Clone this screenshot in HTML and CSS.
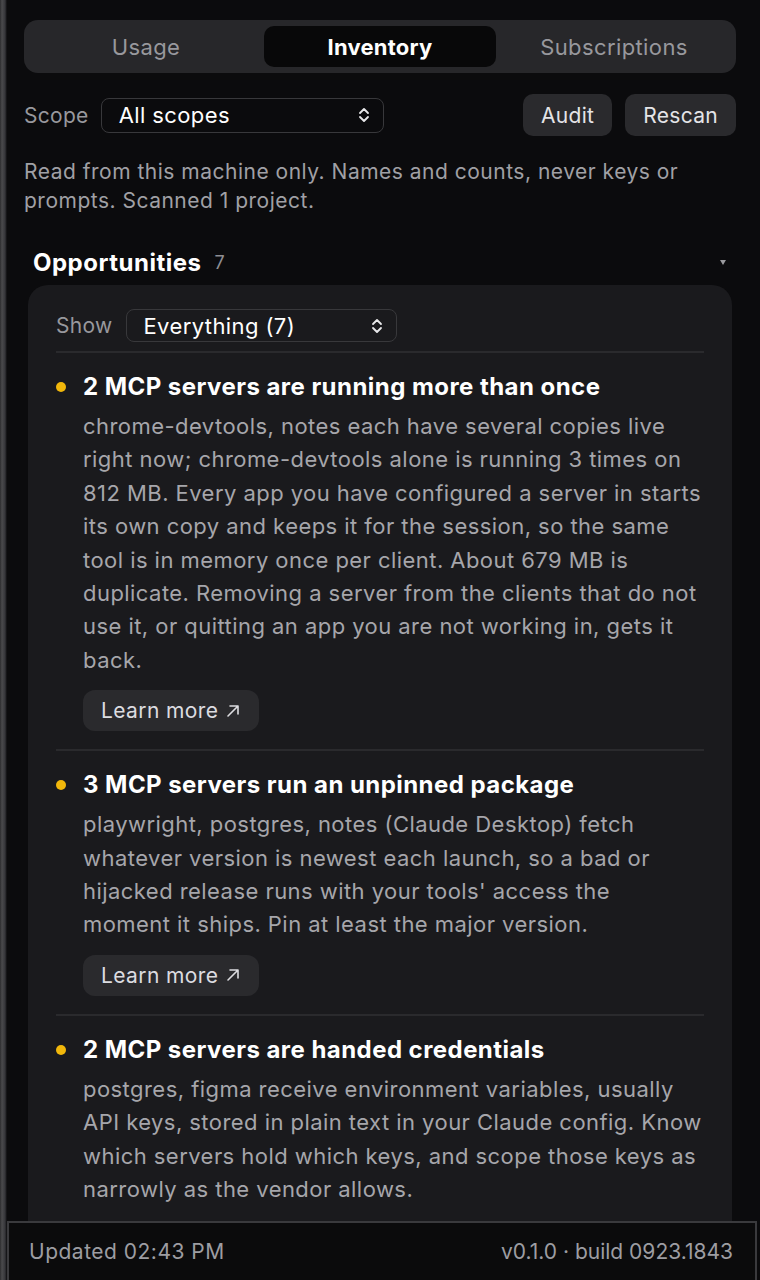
FILE: index.html
```html
<!DOCTYPE html>
<html>
<head lang="en">
    <meta charset="UTF-8">
    <title>Inventory</title>
    <link rel="stylesheet" href="styles.css">
</head>
<body>
<div class="app">
    <div class="main">
        <div class="tabs">
            <div class="tab">Usage</div>
            <div class="tab active">Inventory</div>
            <div class="tab">Subscriptions</div>
        </div>

        <div class="toolbar">
            <span class="label">Scope</span>
            <div class="select scope-select">
                <span>All scopes</span>
                <svg class="updown" width="14" height="18" viewBox="0 0 14 18"><path d="M3 7 L7 3 L11 7 M3 11 L7 15 L11 11" fill="none" stroke="#e8e8ea" stroke-width="1.8" stroke-linecap="round" stroke-linejoin="round"/></svg>
            </div>
            <div class="spacer"></div>
            <button class="btn">Audit</button>
            <button class="btn">Rescan</button>
        </div>

        <p class="note">Read from this machine only. Names and counts, never keys or prompts. Scanned 1 project.</p>

        <div class="section-head">
            <span class="section-title">Opportunities</span>
            <span class="count">7</span>
            <span class="caret"></span>
        </div>

        <div class="card">
            <div class="filter">
                <span class="label">Show</span>
                <div class="select show-select">
                    <span>Everything (7)</span>
                    <svg class="updown" width="14" height="18" viewBox="0 0 14 18"><path d="M3 7 L7 3 L11 7 M3 11 L7 15 L11 11" fill="none" stroke="#e8e8ea" stroke-width="1.8" stroke-linecap="round" stroke-linejoin="round"/></svg>
                </div>
            </div>

            <div class="item">
                <span class="dot"></span>
                <div class="item-body">
                    <div class="item-title">2 MCP servers are running more than once</div>
                    <p class="item-text">chrome-devtools, notes each have several copies live right now; chrome-devtools alone is running 3 times on 812 MB. Every app you have configured a server in starts its own copy and keeps it for the session, so the same tool is in memory once per client. About 679 MB is duplicate. Removing a server from the clients that do not use it, or quitting an app you are not working in, gets it back.</p>
                    <button class="learn">Learn more <svg width="16" height="16" viewBox="0 0 16 16"><path d="M3 13 L13 3 M5 3 H13 V11" fill="none" stroke="#dcdce0" stroke-width="1.6" stroke-linecap="round" stroke-linejoin="round"/></svg></button>
                </div>
            </div>

            <div class="item">
                <span class="dot"></span>
                <div class="item-body">
                    <div class="item-title">3 MCP servers run an unpinned package</div>
                    <p class="item-text">playwright, postgres, notes (Claude Desktop) fetch whatever version is newest each launch, so a bad or hijacked release runs with your tools' access the moment it ships. Pin at least the major version.</p>
                    <button class="learn">Learn more <svg width="16" height="16" viewBox="0 0 16 16"><path d="M3 13 L13 3 M5 3 H13 V11" fill="none" stroke="#dcdce0" stroke-width="1.6" stroke-linecap="round" stroke-linejoin="round"/></svg></button>
                </div>
            </div>

            <div class="item">
                <span class="dot"></span>
                <div class="item-body">
                    <div class="item-title">2 MCP servers are handed credentials</div>
                    <p class="item-text">postgres, figma receive environment variables, usually API keys, stored in plain text in your Claude config. Know which servers hold which keys, and scope those keys as narrowly as the vendor allows.</p>
                </div>
            </div>
        </div>
    </div>

    <div class="footer">
        <span class="updated">Updated 02:43 PM</span>
        <span>v0.1.0 · build 0923.1843</span>
    </div>
</div>
</body>
</html>
```

FILE: styles.css
```css
*{
    padding: 0;
    margin: 0;
    box-sizing: border-box;
}
body{
    background: #0b0b0d;
    font-family: Inter, "Noto Sans", sans-serif;
    color: #f4f4f6;
}
.app{
    width: 760px;
    height: 1280px;
    display: flex;
    flex-direction: column;
    background: linear-gradient(to right, #2c2c2e 0, #4a4a4c 2px, #36363a 5px, #0b0b0d 7px);
}
.main{
    flex: 1;
    overflow: hidden;
    padding: 20px 24px 0 24px;
}

/* tabs */
.tabs{
    height: 53px;
    background: #27272a;
    border-radius: 14px;
    padding: 6px;
    display: grid;
    grid-template-columns: 1fr 1fr 1fr;
    gap: 2px;
}
.tab{
    display: flex;
    align-items: center;
    justify-content: center;
    font-size: 22px;
    letter-spacing: 0.4px;
    color: #98989d;
    border-radius: 10px;
}
.tab.active{
    background: #080809;
    color: #fff;
    font-weight: 700;
    letter-spacing: 0.2px;
}

/* toolbar */
.toolbar{
    margin-top: 21px;
    height: 42px;
    display: flex;
    align-items: center;
}
.label{
    font-size: 21px;
    letter-spacing: 0.3px;
    color: #98989d;
    margin-right: 12px;
}
.select{
    height: 35px;
    border: 1px solid #38383b;
    border-radius: 8px;
    display: flex;
    align-items: center;
    justify-content: space-between;
    padding: 0 12px 0 17px;
    font-size: 22px;
    letter-spacing: 0.4px;
    color: #fff;
}
.scope-select{
    width: 283px;
}
.spacer{
    flex: 1;
}
.btn{
    height: 42px;
    padding: 0 18px;
    border: none;
    border-radius: 10px;
    background: #2a2a2d;
    color: #e4e4e7;
    font-family: inherit;
    font-size: 21px;
    letter-spacing: 0.3px;
    margin-left: 13px;
}

.note{
    margin-top: 21px;
    font-size: 21px;
    letter-spacing: 0.5px;
    line-height: 29px;
    color: #a0a0a5;
}

/* section */
.section-head{
    margin-top: 32px;
    padding: 0 9px;
    display: flex;
    align-items: center;
    height: 30px;
}
.section-title{
    font-size: 24px;
    letter-spacing: 0.5px;
    font-weight: 700;
    color: #fff;
}
.count{
    font-size: 18px;
    color: #8e8e93;
    margin-left: 13px;
}
.caret{
    margin-left: auto;
    width: 0;
    height: 0;
    border-left: 3px solid transparent;
    border-right: 3px solid transparent;
    border-top: 5px solid #9a9a9e;
    margin-right: 1px;
}

.card{
    margin: 8px 4px 0 4px;
    background: #1a1a1d;
    border-radius: 20px;
    padding: 24px 28px 40px 28px;
}
.filter{
    display: flex;
    align-items: center;
    padding-bottom: 9px;
    border-bottom: 2px solid #2a2a2d;
}
.filter .label{
    margin-right: 13px;
}
.show-select{
    width: 271px;
    height: 33px;
}

.item{
    display: flex;
    padding: 19px 0 18px 0;
    border-bottom: 2px solid #2a2a2d;
}
.item:last-child{
    border-bottom: none;
}
.dot{
    width: 10px;
    height: 10px;
    border-radius: 50%;
    background: #f1b70b;
    margin: 10px 17px 0 0;
    flex-shrink: 0;
}
.item-body{
    flex: 1;
}
.item-title{
    font-size: 24px;
    letter-spacing: 0.45px;
    font-weight: 700;
    line-height: 30px;
    color: #fff;
}
.item-text{
    margin-top: 8px;
    font-size: 22px;
    letter-spacing: 0.45px;
    line-height: 33.4px;
    color: #a6a6ab;
}
.learn{
    margin-top: 13px;
    height: 41px;
    padding: 0 18px;
    border: none;
    border-radius: 12px;
    background: #2a2a2d;
    color: #dcdce0;
    font-family: inherit;
    font-size: 21px;
    letter-spacing: 0.4px;
    display: inline-flex;
    align-items: center;
    gap: 7px;
}

.footer{
    height: 59px;
    margin: 0 3px 0 7px;
    border: 2px solid #3a3a3d;
    border-bottom: none;
    background: #0b0b0c;
    display: flex;
    align-items: center;
    justify-content: space-between;
    padding: 0 22px 0 20px;
    font-size: 21px;
    color: #9d9da2;
}
.updated{
    letter-spacing: 0.5px;
}
```
